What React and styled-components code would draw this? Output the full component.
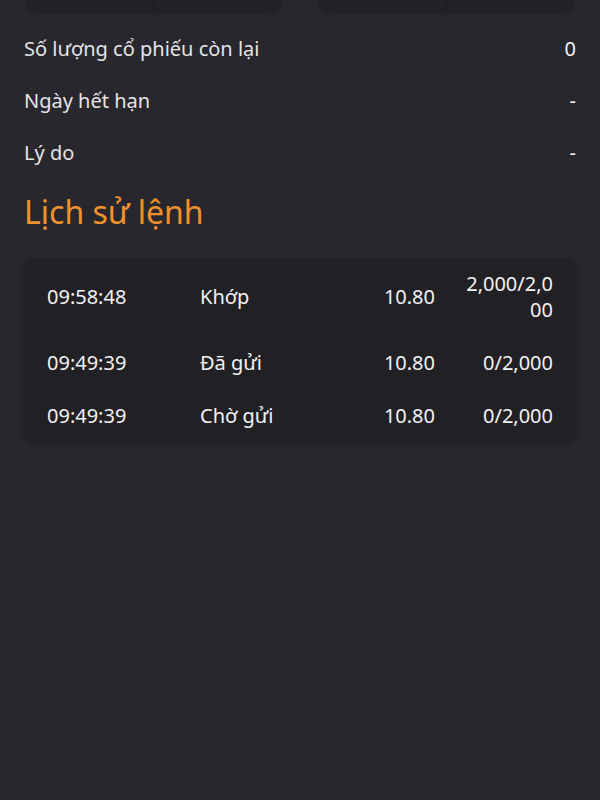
import React from "react";
import styled, { createGlobalStyle } from "styled-components";

const GlobalStyle = createGlobalStyle`
  html, body {
    margin: 0;
    padding: 0;
    background: #28272d;
    min-height: 100%;
  }

  body {
    font-family: "Noto Sans", "Open Sans", sans-serif;
    color: #ececee;
  }
`;

const Page = styled.div`
  min-height: 800px;
  background: #28272d;
  display: flex;
  flex-direction: column;
`;

const TopCards = styled.div`
  display: flex;
  gap: 36px;
  padding: 0 26px;
`;

const TopCard = styled.div`
  flex: 1;
  height: 11px;
  display: flex;
  gap: 2px;
  background: #1d1c21;
  border-radius: 0 0 12px 12px;
  box-shadow: 0 2px 5px rgba(0, 0, 0, 0.25);
  overflow: hidden;
`;

const TopCardHalf = styled.div`
  flex: 1;
  background: #222126;
`;

const Content = styled.div`
  padding: 11px 24px 0;
  display: flex;
  flex-direction: column;
`;

const InfoRow = styled.div`
  height: 52px;
  display: flex;
  align-items: center;
  justify-content: space-between;
  font-size: 20px;
`;

const InfoLabel = styled.span`
  color: #e4e4e7;
`;

const InfoValue = styled.span`
  color: #f4f4f5;
`;

const Heading = styled.h2`
  margin: 12px 0 24px;
  font-size: 32px;
  font-weight: 400;
  line-height: 44px;
  color: #f0922c;
`;

const Table = styled.div`
  display: grid;
  grid-template-columns: 162px 144px 115px 131px;
  background: #212025;
  border-radius: 8px;
  box-shadow: 0 1px 4px rgba(0, 0, 0, 0.2);
  overflow: hidden;
`;

const Cell = styled.div`
  padding: 13px ${(p) => p.$pr || 0}px 14px ${(p) => p.$pl || 0}px;
  font-size: 20px;
  line-height: 26px;
  color: #f2f2f3;
  display: flex;
  align-items: center;
  justify-content: ${(p) => (p.$right ? "flex-end" : "flex-start")};
  text-align: ${(p) => (p.$right ? "right" : "left")};
  word-break: break-all;
  border-left: ${(p) => (p.$sep ? "1px solid #232227" : "none")};
`;

const orders = [
  { time: "09:58:48", status: "Khớp", price: "10.80", qty: "2,000/2,000" },
  { time: "09:49:39", status: "Đã gửi", price: "10.80", qty: "0/2,000" },
  { time: "09:49:39", status: "Chờ gửi", price: "10.80", qty: "0/2,000" }
];

const info = [
  { label: "Số lượng cổ phiếu còn lại", value: "0" },
  { label: "Ngày hết hạn", value: "-" },
  { label: "Lý do", value: "-" }
];

export default function App() {
  return (
    <Page>
      <GlobalStyle />
      <TopCards>
        <TopCard>
          <TopCardHalf />
          <TopCardHalf />
        </TopCard>
        <TopCard>
          <TopCardHalf />
          <TopCardHalf />
        </TopCard>
      </TopCards>
      <Content>
        {info.map((row) => (
          <InfoRow key={row.label}>
            <InfoLabel>{row.label}</InfoLabel>
            <InfoValue>{row.value}</InfoValue>
          </InfoRow>
        ))}
        <Heading>Lịch sử lệnh</Heading>
        <Table>
          {orders.map((o, i) => (
            <React.Fragment key={i}>
              <Cell $pl={23}>{o.time}</Cell>
              <Cell $pl={13} $sep>
                {o.status}
              </Cell>
              <Cell $pr={10} $right $sep>
                {o.price}
              </Cell>
              <Cell $pl={10} $pr={23} $right $sep>
                {o.qty}
              </Cell>
            </React.Fragment>
          ))}
        </Table>
      </Content>
    </Page>
  );
}
